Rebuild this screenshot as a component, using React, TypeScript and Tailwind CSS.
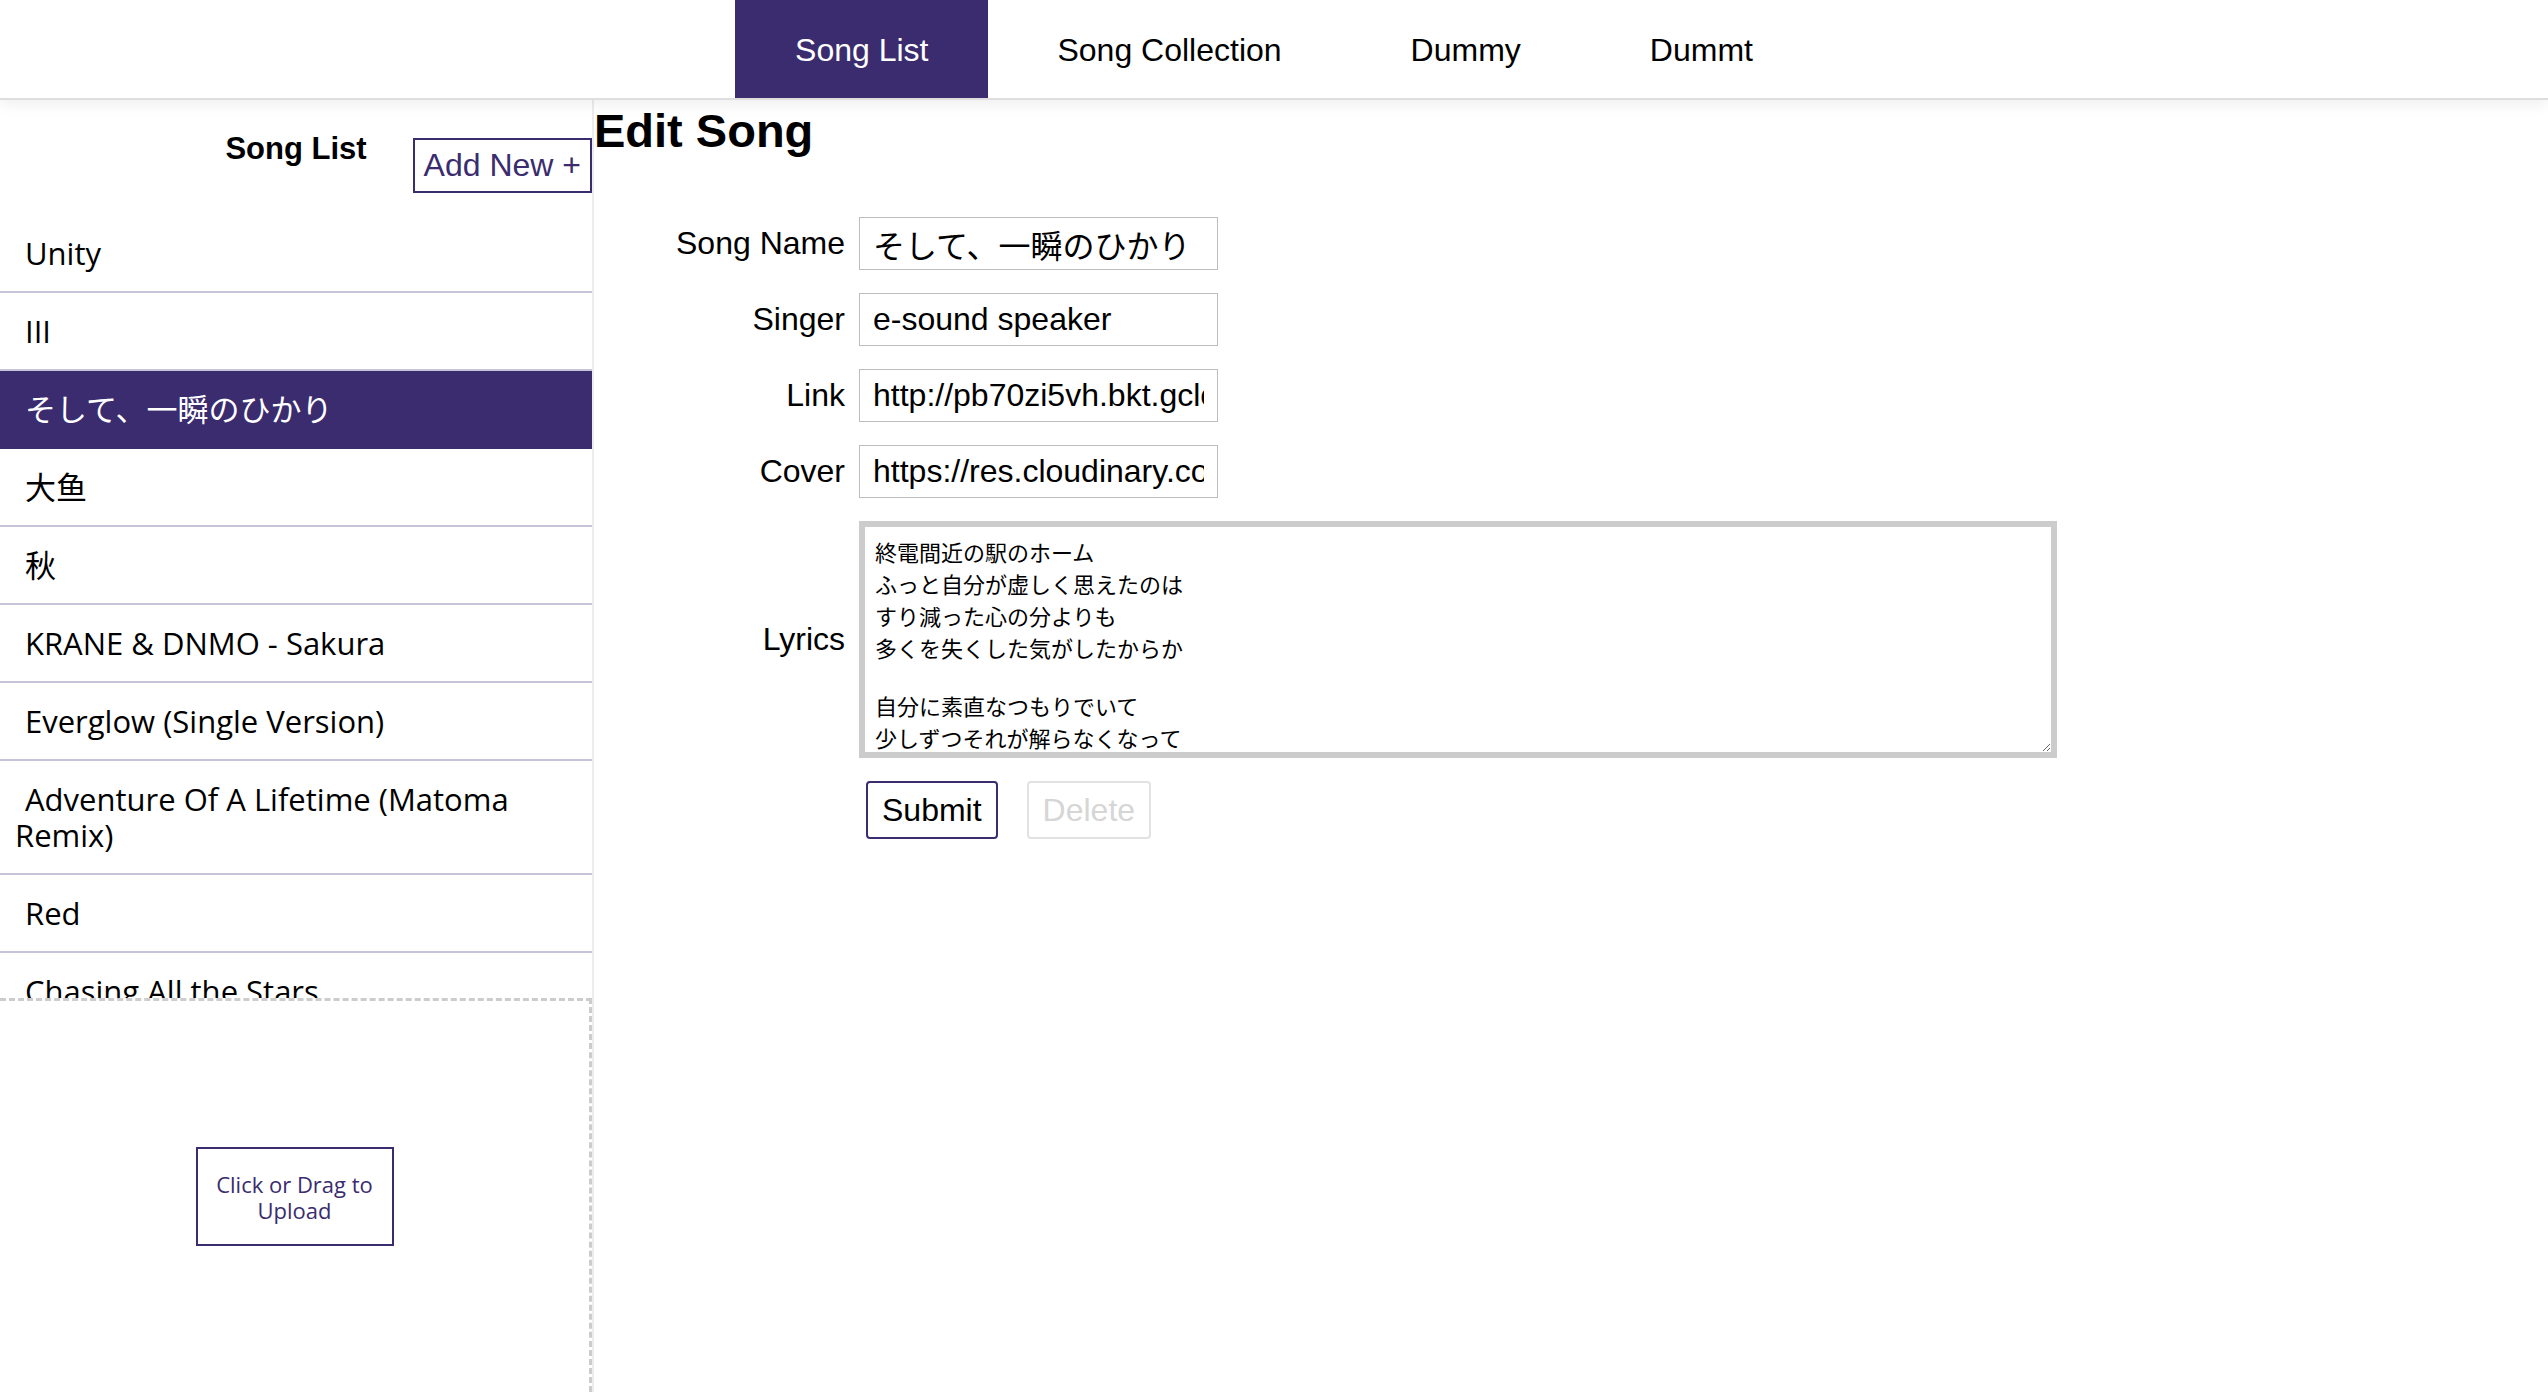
import { useState } from 'react';

const tabs = ['Song List', 'Song Collection', 'Dummy', 'Dummt'];

const songs = [
  'Unity',
  'III',
  'そして、一瞬のひかり',
  '大鱼',
  '秋',
  'KRANE & DNMO - Sakura',
  'Everglow (Single Version)',
  'Adventure Of A Lifetime (Matoma Remix)',
  'Red',
  'Chasing All the Stars',
];

const lyrics = [
  '終電間近の駅のホーム',
  'ふっと自分が虚しく思えたのは',
  'すり減った心の分よりも',
  '多くを失くした気がしたからか',
  '',
  '自分に素直なつもりでいて',
  '少しずつそれが解らなくなって',
].join('\n');

const App = () => {
  const [activeTab, setActiveTab] = useState(0);
  const [selected, setSelected] = useState(2);
  const [form, setForm] = useState({
    name: 'そして、一瞬のひかり',
    singer: 'e-sound speaker',
    link: 'http://pb70zi5vh.bkt.gclouddn.com/soshite-isshun-no-hikari.mp3',
    cover: 'https://res.cloudinary.com/dzjhkzn2y/image/upload/cover.jpg',
    lyrics,
  });

  const fields: { key: 'name' | 'singer' | 'link' | 'cover'; label: string }[] = [
    { key: 'name', label: 'Song Name' },
    { key: 'singer', label: 'Singer' },
    { key: 'link', label: 'Link' },
    { key: 'cover', label: 'Cover' },
  ];

  return (
    <div className="flex h-[1392px] flex-col overflow-hidden bg-white font-['Liberation_Sans','Noto_Sans_CJK_JP',sans-serif] text-black">
      <nav className="relative z-10 flex h-[100px] shrink-0 justify-center gap-[9px] border-b-2 border-[#dedede] bg-white shadow-[0_4px_14px_rgba(0,0,0,0.07)]">
        {tabs.map((tab, i) => (
          <button
            key={tab}
            onClick={() => setActiveTab(i)}
            className={`flex h-full items-center px-[60px] pt-[2px] text-[32px] ${
              activeTab === i ? 'bg-[#3a2c6e] text-white' : 'text-black'
            }`}>
            {tab}
          </button>
        ))}
      </nav>

      <div className="flex min-h-0 flex-1">
        <aside className="flex w-[594px] shrink-0 flex-col border-r-2 border-[#ececec]">
          <div className="grid h-[115px] shrink-0 grid-cols-[1fr_auto_1fr] items-start">
            <div />
            <h3 className="mt-[31px] text-[31px] font-bold leading-[36px]">Song List</h3>
            <div className="flex justify-end">
              <button className="mt-[38px] h-[55px] border-2 border-[#3a2c6e] px-[9px] text-[32px] leading-[37px] text-[#3a2c6e]">
                Add New +
              </button>
            </div>
          </div>

          <ul className="min-h-0 flex-1 overflow-hidden font-['Open_Sans','Noto_Sans_CJK_JP',sans-serif]">
            {songs.map((song, i) => (
              <li
                key={song}
                onClick={() => setSelected(i)}
                className={`cursor-pointer border-b-2 py-[20px] pr-[15px] pl-[15px] indent-[10px] text-[31px] leading-[36px] ${
                  selected === i
                    ? 'border-[#3a2c6e] bg-[#3a2c6e] text-white'
                    : 'border-[#c6c4d9] text-black'
                }`}>
                {song}
              </li>
            ))}
          </ul>

          <div className="flex h-[394px] shrink-0 items-center justify-center border-t-[3px] border-r-[3px] border-dashed border-[#cccccc]">
            <button className="flex h-[99px] w-[198px] items-center justify-center border-2 border-[#3a2c6e] px-[10px] text-center font-['Open_Sans',sans-serif] text-[22px] leading-[26px] text-[#3a2c6e]">
              Click or Drag to Upload
            </button>
          </div>
        </aside>

        <main className="flex-1 pt-[4px]">
          <h1 className="text-[47px] leading-[53px] font-bold">Edit Song</h1>

          <form
            className="mt-[60px] flex flex-col gap-[23px]"
            onSubmit={(e) => e.preventDefault()}>
            {fields.map((f) => (
              <div key={f.key} className="flex items-center">
                <label className="w-[251px] text-right text-[32px] leading-[37px]">{f.label}</label>
                <input
                  className="ml-[14px] h-[53px] w-[359px] border border-[#bdbdbd] px-[13px] text-[32px] outline-none"
                  value={form[f.key]}
                  onChange={(e) => setForm({ ...form, [f.key]: e.target.value })}
                />
              </div>
            ))}

            <div className="flex items-center">
              <label className="w-[251px] text-right text-[32px] leading-[37px]">Lyrics</label>
              <textarea
                className="ml-[14px] h-[237px] w-[1198px] border-[6px] border-[#cccccc] px-[10px] pt-[8px] font-['Liberation_Sans','Noto_Sans_CJK_JP',sans-serif] text-[22px] leading-[normal] outline-none [scrollbar-width:none]"
                value={form.lyrics}
                onChange={(e) => setForm({ ...form, lyrics: e.target.value })}
              />
            </div>

            <div className="flex gap-[29px] pl-[272px]">
              <button
                type="submit"
                className="h-[58px] rounded-[4px] border-2 border-[#3a2c6e] bg-white px-[14px] text-[32px] leading-[37px]">
                Submit
              </button>
              <button
                type="button"
                disabled
                className="h-[58px] rounded-[4px] border-2 border-[#e2e2e2] bg-white px-[14px] text-[32px] leading-[37px] text-[#d6d6d6]">
                Delete
              </button>
            </div>
          </form>
        </main>
      </div>
    </div>
  );
};

export default App;
